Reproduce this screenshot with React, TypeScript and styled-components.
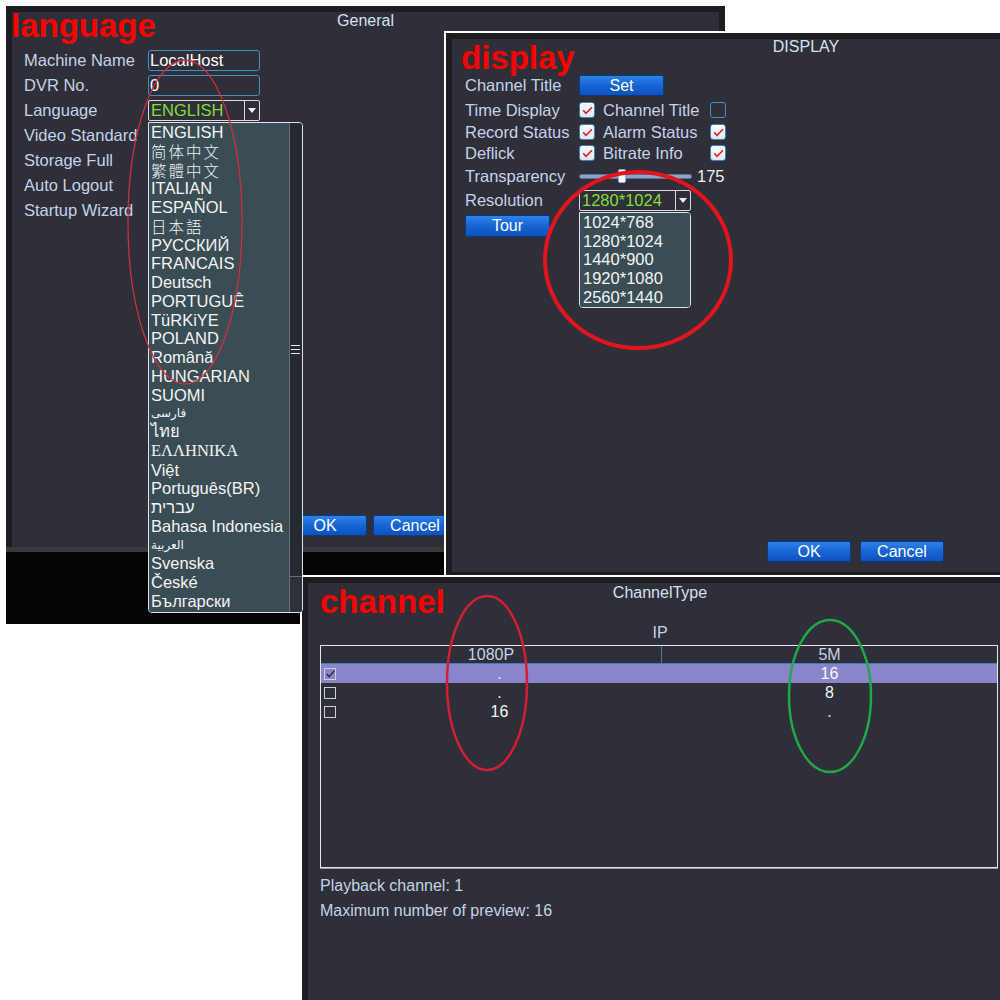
import React from "react";
import styled, { createGlobalStyle } from "styled-components";

const PANEL = "#2e2f38";
const FRAME = "#1c1d21";
const LABEL = "#c6d2e8";
const MENU = "#3a4c54";
const SANS = `"Liberation Sans", Arial, "DejaVu Sans", sans-serif`;

const GlobalStyle = createGlobalStyle`
  html, body { margin: 0; padding: 0; background: #ffffff; }
  body { font-family: ${SANS}; }
  * { box-sizing: border-box; }
`;

const Desktop = styled.div`
  position: relative;
  width: 1000px;
  height: 1000px;
  overflow: hidden;
  background: #ffffff;
  font-family: ${SANS};
`;

const Window = styled.section<{ $x: number; $y: number; $w: number; $h: number; $edge?: boolean }>`
  position: absolute;
  left: ${(p) => p.$x}px;
  top: ${(p) => p.$y}px;
  width: ${(p) => p.$w}px;
  height: ${(p) => p.$h}px;
  background: ${FRAME};
  border-top: ${(p) => (p.$edge ? "2px solid #ffffff" : "none")};
  border-left: ${(p) => (p.$edge ? "2px solid #ffffff" : "none")};
  display: flex;
  flex-direction: column;
`;

const Frame = styled.div<{ $pb: number; $grow?: boolean }>`
  padding: 6px 6px ${(p) => p.$pb}px 6px;
  display: flex;
  flex-direction: column;
  flex: ${(p) => (p.$grow ? 1 : "none")};
  min-height: 0;
`;

const Screen = styled.div<{ $h?: number }>`
  position: relative;
  background: ${PANEL};
  height: ${(p) => (p.$h ? `${p.$h}px` : "auto")};
  flex: ${(p) => (p.$h ? "none" : 1)};
  display: flex;
  flex-direction: column;
`;

const BlackStrip = styled.div`
  flex: 1;
  background: #050505;
  border-top: 5px solid #38393c;
`;

const Title = styled.div<{ $lh: number; $mt: number }>`
  text-align: center;
  color: #d8e0f0;
  font-size: 16px;
  line-height: ${(p) => p.$lh}px;
  margin-top: ${(p) => p.$mt}px;
  white-space: nowrap;
`;

/* ---------- Generic controls ---------- */

const Label = styled.div<{ $w?: number }>`
  color: ${LABEL};
  font-size: 16.5px;
  white-space: nowrap;
  width: ${(p) => (p.$w ? `${p.$w}px` : "auto")};
  flex: none;
`;

const TextBox = styled.div`
  width: 112px;
  height: 21px;
  border: 1.5px solid #4a8cc4;
  border-radius: 3px;
  background: ${PANEL};
  color: #ffffff;
  font-size: 16.5px;
  line-height: 18px;
  padding-left: 1px;
  white-space: nowrap;
`;

const Btn = styled.button<{ $w: number; $h: number }>`
  width: ${(p) => p.$w}px;
  height: ${(p) => p.$h}px;
  padding: 0;
  border: 1px solid #0b3a82;
  border-radius: 2px;
  background: linear-gradient(#2f82ea 0%, #1867d6 45%, #0c52bd 100%);
  color: #ffffff;
  font-family: ${SANS};
  font-size: 16px;
  line-height: 18px;
  flex: none;
`;

const SelectWrap = styled.div`
  position: relative;
  width: fit-content;
`;

const SelectBox = styled.div<{ $w: number }>`
  width: ${(p) => p.$w}px;
  height: 21px;
  display: flex;
  border: 1px solid #d8dade;
  border-radius: 2px;
  background: ${PANEL};
`;

const SelectValue = styled.div`
  flex: 1;
  color: #86dc3c;
  font-size: 16.5px;
  line-height: 19px;
  padding-left: 2px;
  white-space: nowrap;
  overflow: hidden;
`;

const SelectArrow = styled.div`
  width: 15px;
  border-left: 1px solid #d8dade;
  display: flex;
  align-items: center;
  justify-content: center;
  &::after {
    content: "";
    border-left: 4px solid transparent;
    border-right: 4px solid transparent;
    border-top: 5px solid #f0f0f0;
  }
`;

const Menu = styled.div<{ $w: number; $top: number }>`
  position: absolute;
  left: 0;
  top: calc(100% + ${(p) => p.$top}px);
  width: ${(p) => p.$w}px;
  display: flex;
  border: 1px solid #e0e2e6;
  border-radius: 0 4px 4px 4px;
  background: ${MENU};
  z-index: 5;
  overflow: hidden;
`;

const MenuList = styled.ul<{ $pl: number; $pt: number }>`
  list-style: none;
  margin: 0;
  padding: ${(p) => p.$pt}px 0 1px ${(p) => p.$pl}px;
  flex: 1;
  background: ${MENU};
`;

type Variant = "cjk" | "serif" | "arabic" | "thai" | undefined;

const MenuItem = styled.li<{ $v?: Variant; $lh: number }>`
  color: #f4f4f4;
  white-space: nowrap;
  height: ${(p) => p.$lh}px;
  line-height: ${(p) => p.$lh}px;
  font-size: ${(p) => (p.$v === "arabic" ? "12px" : p.$v === "cjk" ? "15.5px" : "16.5px")};
  letter-spacing: ${(p) => (p.$v === "cjk" ? "2px" : "0")};
  font-family: ${(p) =>
    p.$v === "cjk"
      ? `"Noto Sans CJK SC", "Noto Sans CJK JP", sans-serif`
      : p.$v === "serif" || p.$v === "thai"
      ? `"Liberation Serif", "DejaVu Serif", serif`
      : SANS};
  font-weight: ${(p) => (p.$v === "cjk" ? 300 : 400)};
`;

const ScrollTrack = styled.div`
  width: 13px;
  flex: none;
  background: #252a30;
  border-left: 1px solid #6a6e74;
  display: flex;
  flex-direction: column;
  padding-top: 222px;
`;

const Grip = styled.div`
  height: 9px;
  margin: 0 2px 0 1px;
  border-top: 1px solid #e8e8e8;
  border-bottom: 1px solid #e8e8e8;
  position: relative;
  &::after {
    content: "";
    position: absolute;
    left: 0;
    right: 0;
    top: 3px;
    border-top: 1px solid #e8e8e8;
  }
`;

const ScrollEnd = styled.div`
  margin-top: auto;
  height: 36px;
  border-top: 1px solid #6a6e74;
  background: #2d3238;
`;

const Footer = styled.div<{ $pl: number; $pb: number; $gap: number }>`
  margin-top: auto;
  display: flex;
  gap: ${(p) => p.$gap}px;
  padding: 0 0 ${(p) => p.$pb}px ${(p) => p.$pl}px;
`;

/* ---------- General (language) ---------- */

const GeneralForm = styled.div`
  margin-top: 18px;
  padding-left: 12px;
  display: grid;
  grid-template-columns: 124px 112px;
  grid-auto-rows: 25px;
  align-items: center;
`;

/* ---------- Display ---------- */

const DisplayForm = styled.div`
  margin-top: 18px;
  padding-left: 13px;
  display: flex;
  flex-direction: column;
`;

const Row = styled.div<{ $h: number }>`
  height: ${(p) => p.$h}px;
  display: flex;
  align-items: center;
`;

const CheckBox = styled.div<{ $on: boolean }>`
  width: 16px;
  height: 16px;
  flex: none;
  border: 1.5px solid ${(p) => (p.$on ? "#3d7fbf" : "#4a8cc8")};
  border-radius: 3px;
  background: ${(p) => (p.$on ? "linear-gradient(#ffffff, #dfe7f0)" : PANEL)};
  display: flex;
  align-items: center;
  justify-content: center;
`;

const SubLabel = styled(Label)`
  margin-left: 8px;
`;

const SliderBox = styled.div`
  position: relative;
  width: 113px;
  height: 14px;
  display: flex;
  align-items: center;
  flex: none;
`;

const Track = styled.div`
  width: 100%;
  height: 5px;
  border-radius: 3px;
  background: #8ea4c6;
  border: 1px solid #5f7596;
`;

const Thumb = styled.div`
  position: absolute;
  top: 0;
  width: 8px;
  height: 14px;
  background: #f4f6fa;
  border: 1px solid #8fb0d8;
  border-radius: 2px;
`;

const Value = styled.div`
  color: #f0f0f0;
  font-size: 16.5px;
  margin-left: 5px;
`;

const TourRow = styled.div`
  margin-top: 2px;
`;

/* ---------- Channel ---------- */

const IPLine = styled.div`
  margin-top: 22px;
  text-align: center;
  color: ${LABEL};
  font-size: 16px;
  line-height: 18px;
`;

const Table = styled.div`
  margin: 3px 0 0 12px;
  width: 678px;
  height: 223px;
  border: 1px solid #e4e6ea;
  box-shadow: 0 1px 0 #9a9ca0;
  display: flex;
  flex-direction: column;
`;

const HeadRow = styled.div`
  height: 18px;
  display: grid;
  grid-template-columns: 341px 1fr;
  border-bottom: 1px solid #3d7dbd;
`;

const HeadCell = styled.div<{ $sep?: boolean }>`
  text-align: center;
  color: ${LABEL};
  font-size: 16px;
  line-height: 18px;
  border-right: ${(p) => (p.$sep ? "1px solid #3d7dbd" : "none")};
`;

const DataRow = styled.div<{ $hl?: boolean }>`
  height: 19px;
  display: grid;
  grid-template-columns: 16px 325px 1fr;
  align-items: center;
  background: ${(p) => (p.$hl ? "#8985cb" : "transparent")};
`;

const Cell = styled.div`
  text-align: center;
  color: #f6f6f6;
  font-size: 16px;
  line-height: 19px;
`;

const TinyBox = styled.div`
  width: 12px;
  height: 12px;
  margin-left: 3px;
  border: 1.5px solid #c8d0dc;
  display: flex;
  align-items: center;
  justify-content: center;
`;

const InfoBlock = styled.div`
  margin-top: 9px;
  padding-left: 12px;
  display: flex;
  flex-direction: column;
  gap: 7px;
`;

const InfoLine = styled.div`
  color: ${LABEL};
  font-size: 16px;
  line-height: 18px;
`;

/* ---------- Annotations ---------- */

const Tag = styled.div<{ $x: number; $y: number }>`
  position: absolute;
  left: ${(p) => p.$x}px;
  top: ${(p) => p.$y}px;
  color: #ff0000;
  font-family: ${SANS};
  font-weight: 700;
  font-size: 33px;
  line-height: 33px;
  z-index: 20;
  white-space: nowrap;
`;

const Marks = styled.svg`
  position: absolute;
  left: 0;
  top: 0;
  z-index: 19;
  pointer-events: none;
`;

/* ---------- Pieces ---------- */

const Check = ({ on }: { on: boolean }) => (
  <CheckBox $on={on}>
    {on && (
      <svg width="11" height="9" viewBox="0 0 11 9">
        <path d="M1.2 4.2 L4 7.4 L10 1.2" fill="none" stroke="#d42030" strokeWidth="1.6" />
      </svg>
    )}
  </CheckBox>
);

const TinyCheck = ({ on }: { on: boolean }) => (
  <TinyBox>
    {on && (
      <svg width="9" height="8" viewBox="0 0 9 8">
        <path d="M0.8 4 L3.2 6.6 L8.4 0.8" fill="none" stroke="#2a2a3a" strokeWidth="1.4" />
      </svg>
    )}
  </TinyBox>
);

const languages: { t: string; v?: Variant }[] = [
  { t: "ENGLISH" },
  { t: "简体中文", v: "cjk" },
  { t: "繁體中文", v: "cjk" },
  { t: "ITALIAN" },
  { t: "ESPAÑOL" },
  { t: "日本語", v: "cjk" },
  { t: "РУССКИЙ" },
  { t: "FRANCAIS" },
  { t: "Deutsch" },
  { t: "PORTUGUÊ" },
  { t: "TüRKiYE" },
  { t: "POLAND" },
  { t: "Română" },
  { t: "HUNGARIAN" },
  { t: "SUOMI" },
  { t: "فارسی", v: "arabic" },
  { t: "ไทย", v: "thai" },
  { t: "ΕΛΛΗΝΙΚΑ", v: "serif" },
  { t: "Việt" },
  { t: "Português(BR)" },
  { t: "עברית" },
  { t: "Bahasa Indonesia" },
  { t: "العربية", v: "arabic" },
  { t: "Svenska" },
  { t: "České" },
  { t: "Български" },
];

const resolutions = ["1024*768", "1280*1024", "1440*900", "1920*1080", "2560*1440"];

const channelRows = [
  { on: true, a: ".", b: "16", hl: true },
  { on: false, a: ".", b: "8" },
  { on: false, a: "16", b: "." },
];

const transparency = 175;
const thumbLeft = ((transparency - 128) / (255 - 128)) * (113 - 8);

export default function App() {
  return (
    <>
      <GlobalStyle />
      <Desktop>
        {/* General / language window */}
        <Window $x={6} $y={6} $w={719} $h={618}>
          <Frame $pb={0}>
            <Screen $h={535}>
              <Title $lh={18} $mt={0}>General</Title>
              <GeneralForm>
                <Label>Machine Name</Label>
                <TextBox>LocalHost</TextBox>
                <Label>DVR No.</Label>
                <TextBox>0</TextBox>
                <Label>Language</Label>
                <SelectWrap>
                  <SelectBox $w={112}>
                    <SelectValue>ENGLISH</SelectValue>
                    <SelectArrow />
                  </SelectBox>
                  <Menu $w={155} $top={1}>
                    <MenuList $pl={2} $pt={0}>
                      {languages.map((l) => (
                        <MenuItem key={l.t} $v={l.v} $lh={18.76}>
                          {l.t}
                        </MenuItem>
                      ))}
                    </MenuList>
                    <ScrollTrack>
                      <Grip />
                      <ScrollEnd />
                    </ScrollTrack>
                  </Menu>
                </SelectWrap>
                <Label>Video Standard</Label>
                <div />
                <Label>Storage Full</Label>
                <div />
                <Label>Auto Logout</Label>
                <div />
                <Label>Startup Wizard</Label>
                <div />
              </GeneralForm>
              <Footer $pl={271} $pb={11} $gap={6}>
                <Btn $w={84} $h={21}>OK</Btn>
                <Btn $w={84} $h={21}>Cancel</Btn>
              </Footer>
            </Screen>
          </Frame>
          <BlackStrip />
        </Window>

        {/* Display window */}
        <Window $x={444} $y={31} $w={722} $h={546} $edge>
          <Frame $pb={5} $grow>
            <Screen>
              <Title $lh={16} $mt={0}>DISPLAY</Title>
              <DisplayForm>
                <Row $h={25}>
                  <Label $w={114}>Channel Title</Label>
                  <Btn $w={85} $h={21}>Set</Btn>
                </Row>
                <Row $h={24}>
                  <Label $w={114}>Time Display</Label>
                  <Check on />
                  <SubLabel $w={107}>Channel Title</SubLabel>
                  <Check on={false} />
                </Row>
                <Row $h={20}>
                  <Label $w={114}>Record Status</Label>
                  <Check on />
                  <SubLabel $w={107}>Alarm Status</SubLabel>
                  <Check on />
                </Row>
                <Row $h={22}>
                  <Label $w={114}>Deflick</Label>
                  <Check on />
                  <SubLabel $w={107}>Bitrate Info</SubLabel>
                  <Check on />
                </Row>
                <Row $h={24}>
                  <Label $w={114}>Transparency</Label>
                  <SliderBox>
                    <Track />
                    <Thumb style={{ left: `${thumbLeft}px` }} />
                  </SliderBox>
                  <Value>{transparency}</Value>
                </Row>
                <Row $h={25}>
                  <Label $w={114}>Resolution</Label>
                  <SelectWrap>
                    <SelectBox $w={112}>
                      <SelectValue>1280*1024</SelectValue>
                      <SelectArrow />
                    </SelectBox>
                    <Menu $w={112} $top={1}>
                      <MenuList $pl={3} $pt={0}>
                        {resolutions.map((r) => (
                          <MenuItem key={r} $lh={18.7}>
                            {r}
                          </MenuItem>
                        ))}
                      </MenuList>
                    </Menu>
                  </SelectWrap>
                </Row>
                <TourRow>
                  <Btn $w={85} $h={22}>Tour</Btn>
                </TourRow>
              </DisplayForm>
              <Footer $pl={315} $pb={10} $gap={9}>
                <Btn $w={84} $h={21}>OK</Btn>
                <Btn $w={84} $h={21}>Cancel</Btn>
              </Footer>
            </Screen>
          </Frame>
        </Window>

        {/* ChannelType window */}
        <Window $x={300} $y={575} $w={718} $h={440} $edge>
          <Frame $pb={0} $grow>
            <Screen>
              <Title $lh={18} $mt={1}>ChannelType</Title>
              <IPLine>IP</IPLine>
              <Table>
                <HeadRow>
                  <HeadCell $sep>1080P</HeadCell>
                  <HeadCell>5M</HeadCell>
                </HeadRow>
                {channelRows.map((r, i) => (
                  <DataRow key={i} $hl={r.hl}>
                    <TinyCheck on={r.on} />
                    <Cell>{r.a}</Cell>
                    <Cell>{r.b}</Cell>
                  </DataRow>
                ))}
              </Table>
              <InfoBlock>
                <InfoLine>Playback channel: 1</InfoLine>
                <InfoLine>Maximum number of preview: 16</InfoLine>
              </InfoBlock>
            </Screen>
          </Frame>
        </Window>

        {/* Annotations */}
        <Marks width="1000" height="1000" viewBox="0 0 1000 1000">
          <ellipse cx="185" cy="222" rx="57" ry="162" fill="none" stroke="#cc3040" strokeWidth="1.3" />
          <ellipse cx="638" cy="260" rx="93" ry="88" fill="none" stroke="#e2141e" strokeWidth="4" />
          <ellipse cx="487" cy="683" rx="40" ry="87" fill="none" stroke="#d41e32" strokeWidth="2.5" />
          <ellipse cx="830" cy="696" rx="41" ry="76" fill="none" stroke="#22a847" strokeWidth="2.5" />
        </Marks>
        <Tag $x={11} $y={9}>language</Tag>
        <Tag $x={461} $y={41}>display</Tag>
        <Tag $x={320} $y={585}>channel</Tag>
      </Desktop>
    </>
  );
}
